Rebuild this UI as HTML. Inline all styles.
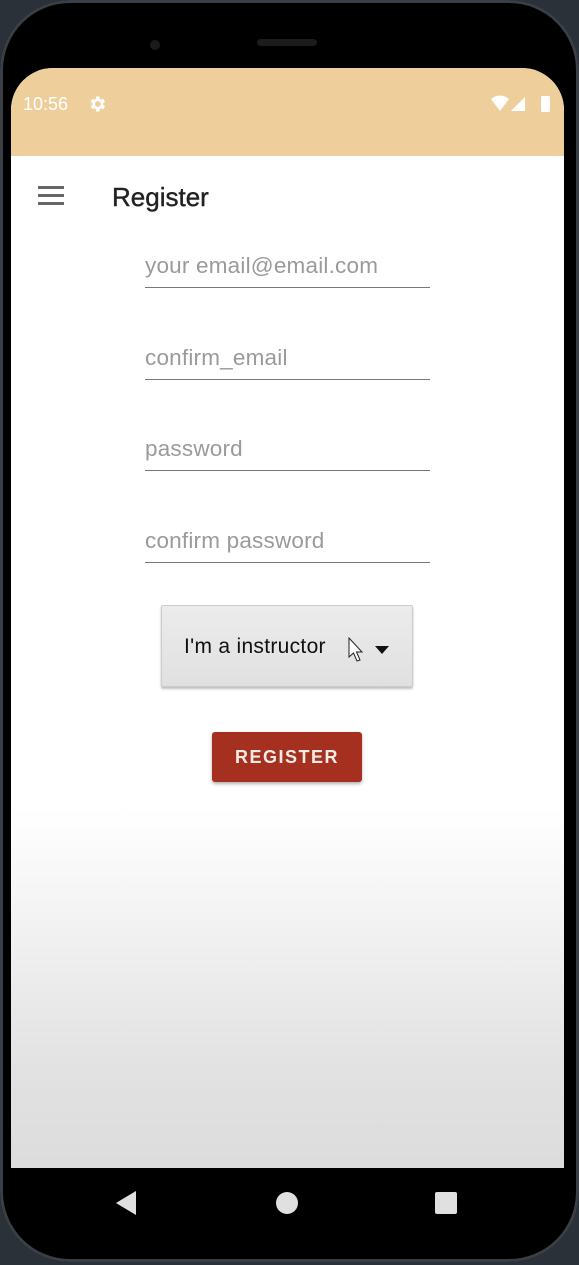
<!DOCTYPE html>
<html><head><style>
html,body{margin:0;padding:0;width:579px;height:1265px;overflow:hidden;background:#2b3138;font-family:"Liberation Sans",sans-serif}
.phone{position:absolute;left:0;top:0;width:579px;height:1262px;background:#000;border-radius:70px;box-shadow:inset 0 0 0 3px #3a3f45;overflow:hidden}
.screen{position:absolute;left:11px;top:68px;width:553px;height:1100px;border-radius:42px 42px 0 0;overflow:hidden;background:linear-gradient(#fff 0,#fff 740px,#e2e2e2 1000px,#dcdcdc 1100px)}
.status{position:absolute;left:0;top:0;width:553px;height:88px;background:#eecf9c}
.t{position:absolute;font-size:18px;color:#fff}
.field{position:absolute;left:134px;width:285px;border-bottom:1.5px solid #777;font-size:22.5px;color:#9a9a9a;height:34px;letter-spacing:0.2px}
</style></head><body>
<div class="phone">
<div style="position:absolute;left:257px;top:39px;width:60px;height:7px;border-radius:4px;background:#1c1c1c"></div>
<div style="position:absolute;left:150px;top:40px;width:10px;height:10px;border-radius:50%;background:#1a1a1a"></div>
<div class="screen">
<div class="status">
<div class="t" style="left:12px;top:26px">10:56</div>
<svg style="position:absolute;left:76px;top:26px" width="20" height="20" viewBox="0 0 24 24"><path fill="#fff" d="M19.4 13a7.5 7.5 0 0 0 0-2l2.1-1.6-2-3.5-2.5 1a7 7 0 0 0-1.7-1L15 3h-4l-.4 2.9a7 7 0 0 0-1.7 1l-2.5-1-2 3.5L6.6 11a7.5 7.5 0 0 0 0 2l-2.1 1.6 2 3.5 2.5-1a7 7 0 0 0 1.7 1L11 21h4l.4-2.9a7 7 0 0 0 1.7-1l2.5 1 2-3.5zM13 15.5a3.5 3.5 0 1 1 0-7 3.5 3.5 0 0 1 0 7z"/></svg>
<svg style="position:absolute;left:480px;top:26px" width="66" height="20" viewBox="0 0 66 20"><path fill="#fff" d="M0 5Q9-2 18 5L9 17z"/><path fill="#fff" d="M20 17L34 3V17z"/><rect x="50" y="2" width="9" height="16" rx="1.5" fill="#fff"/></svg>
</div>
<div style="position:absolute;left:27px;top:118px;width:26px">
<div style="height:2.5px;background:#666;margin-bottom:5.5px"></div><div style="height:2.5px;background:#666;margin-bottom:5.5px"></div><div style="height:2.5px;background:#666"></div></div>
<div style="position:absolute;left:101px;top:114px;font-size:26px;color:#222;-webkit-text-stroke:0.4px #222">Register</div>
<div class="field" style="top:185px">your email@email.com</div>
<div class="field" style="top:277px">confirm_email</div>
<div class="field" style="top:368px">password</div>
<div class="field" style="top:460px">confirm password</div>
<div style="position:absolute;left:150px;top:537px;width:250px;height:80px;background:linear-gradient(#ececec,#e0e0e0);border:1px solid #ccc;box-shadow:0 2px 2px rgba(0,0,0,.25);border-radius:2px">
<div style="position:absolute;left:22px;top:29px;font-size:21px;color:#111;letter-spacing:0.3px">I'm a instructor</div>
<svg style="position:absolute;left:186px;top:31px" width="16" height="26" viewBox="0 0 16 26"><path d="M1 1V20L5.5 16 9 24 12 23 8.5 15H14z" fill="#fff" stroke="#222" stroke-width="1"/></svg>
<div style="position:absolute;left:213px;top:40px;width:0;height:0;border-left:7px solid transparent;border-right:7px solid transparent;border-top:8px solid #111"></div>
</div>
<div style="position:absolute;left:201px;top:664px;width:150px;height:50px;background:#a5301f;border-radius:3px;box-shadow:0 2px 3px rgba(0,0,0,.3);color:#f3ece6;font-size:18px;font-weight:bold;letter-spacing:1.5px;text-align:center;line-height:50px">REGISTER</div>
</div>
<svg style="position:absolute;left:115px;top:1190px" width="22" height="26" viewBox="0 0 22 26"><path d="M21 1V25L1 13z" fill="#e0e0e0"/></svg>
<div style="position:absolute;left:276px;top:1192px;width:22px;height:22px;border-radius:50%;background:#e0e0e0"></div>
<div style="position:absolute;left:435px;top:1192px;width:22px;height:22px;border-radius:2px;background:#e0e0e0"></div>
</div>
</body></html>
